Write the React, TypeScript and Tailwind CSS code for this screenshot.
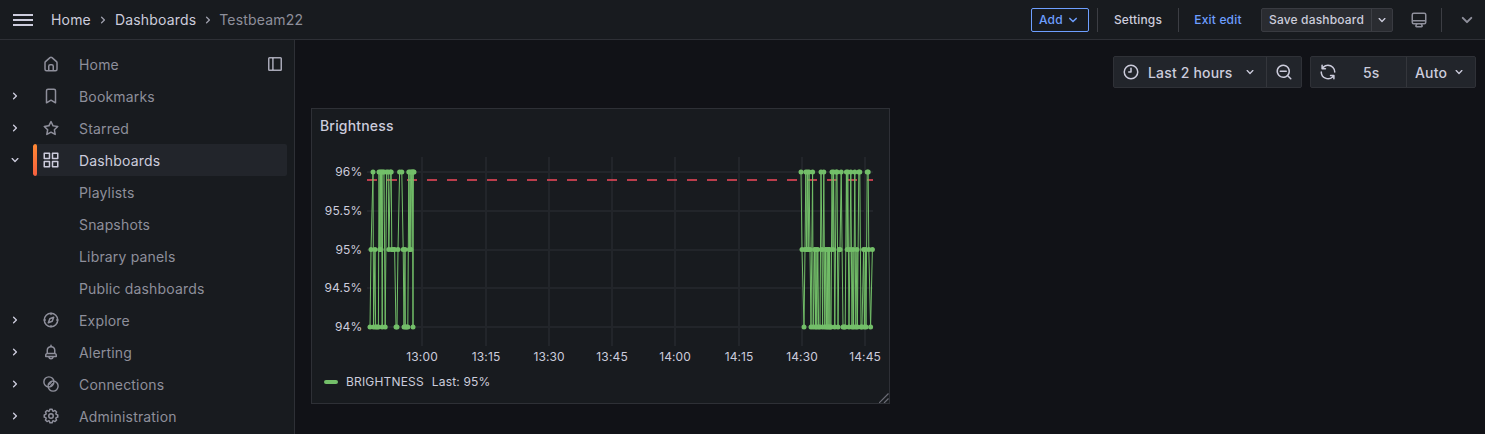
import type { ReactNode } from "react";

const ICONS = {
  angleDown:
    "M17,9.17a1,1,0,0,0-1.41,0L12,12.71,8.46,9.17a1,1,0,0,0-1.41,0,1,1,0,0,0,0,1.42l4.24,4.24a1,1,0,0,0,1.42,0L17,10.59A1,1,0,0,0,17,9.17Z",
  angleRight:
    "M14.83,11.29,10.59,7.05a1,1,0,0,0-1.42,0,1,1,0,0,0,0,1.41L12.71,12,9.17,15.54a1,1,0,0,0,0,1.41,1,1,0,0,0,.71.29,1,1,0,0,0,.71-.29l4.24-4.24A1,1,0,0,0,14.83,11.29Z",
  home: "M20,8h0L14,2.74a3,3,0,0,0-4,0L4,8a3,3,0,0,0-1,2.26V19a3,3,0,0,0,3,3H18a3,3,0,0,0,3-3V10.25A3,3,0,0,0,20,8ZM14,20H10V15a1,1,0,0,1,1-1h2a1,1,0,0,1,1,1Zm5-1a1,1,0,0,1-1,1H16V15a3,3,0,0,0-3-3H11a3,3,0,0,0-3,3v5H6a1,1,0,0,1-1-1V10.25a1,1,0,0,1,.34-.75l6-5.25a1,1,0,0,1,1.32,0l6,5.25a1,1,0,0,1,.34.75Z",
  bookmark:
    "M16,2H8A3,3,0,0,0,5,5V21a1,1,0,0,0,.5.87,1,1,0,0,0,1,0L12,18.69l5.5,3.18A1,1,0,0,0,18,22a1,1,0,0,0,.5-.13A1,1,0,0,0,19,21V5A3,3,0,0,0,16,2Zm1,17.27-4.5-2.6a1,1,0,0,0-1,0L7,19.27V5A1,1,0,0,1,8,4h8a1,1,0,0,1,1,1Z",
  star: "M22,9.67A1,1,0,0,0,21.14,9l-5.69-.83L12.9,3a1,1,0,0,0-1.8,0L8.55,8.16,2.86,9a1,1,0,0,0-.81.68,1,1,0,0,0,.25,1l4.13,4-1,5.68A1,1,0,0,0,6.9,21.44L12,18.77l5.1,2.67a.93.93,0,0,0,.46.12,1,1,0,0,0,.59-.19,1,1,0,0,0,.4-1l-1-5.68,4.13-4A1,1,0,0,0,22,9.67Zm-6.15,4a1,1,0,0,0-.29.88l.72,4.2-3.76-2a1.06,1.06,0,0,0-.94,0l-3.76,2,.72-4.2a1,1,0,0,0-.29-.88l-3-3,4.21-.61a1,1,0,0,0,.76-.55L12,5.7l1.88,3.82a1,1,0,0,0,.76.55l4.21.61Z",
  apps: "M10,13H3a1,1,0,0,0-1,1v7a1,1,0,0,0,1,1h7a1,1,0,0,0,1-1V14A1,1,0,0,0,10,13ZM9,20H4V15H9ZM21,2H14a1,1,0,0,0-1,1v7a1,1,0,0,0,1,1h7a1,1,0,0,0,1-1V3A1,1,0,0,0,21,2ZM20,9H15V4h5Zm1,4H14a1,1,0,0,0-1,1v7a1,1,0,0,0,1,1h7a1,1,0,0,0,1-1V14A1,1,0,0,0,21,13Zm-1,7H15V15h5ZM10,2H3A1,1,0,0,0,2,3v7a1,1,0,0,0,1,1h7a1,1,0,0,0,1-1V3A1,1,0,0,0,10,2ZM9,9H4V4H9Z",
  bell: "M18,13.18V10a6,6,0,0,0-5-5.91V3a1,1,0,0,0-2,0V4.09A6,6,0,0,0,6,10v3.18A3,3,0,0,0,4,16v2a1,1,0,0,0,1,1H8.14a4,4,0,0,0,7.72,0H19a1,1,0,0,0,1-1V16A3,3,0,0,0,18,13.18ZM8,10a4,4,0,0,1,8,0v3H8Zm4,10a2,2,0,0,1-1.72-1h3.44A2,2,0,0,1,12,20Zm6-3H6V16a1,1,0,0,1,1-1H17a1,1,0,0,1,1,1Z",
  cog: "M21.32,9.55l-1.89-.63.89-1.78A1,1,0,0,0,20.13,6L18,3.87a1,1,0,0,0-1.15-.19l-1.78.89-.63-1.89A1,1,0,0,0,13.5,2h-3a1,1,0,0,0-.95.68L8.92,4.57,7.14,3.68A1,1,0,0,0,6,3.87L3.87,6a1,1,0,0,0-.19,1.15l.89,1.78-1.89.63A1,1,0,0,0,2,10.5v3a1,1,0,0,0,.68.95l1.89.63-.89,1.78A1,1,0,0,0,3.87,18L6,20.13a1,1,0,0,0,1.15.19l1.78-.89.63,1.89a1,1,0,0,0,.95.68h3a1,1,0,0,0,.95-.68l.63-1.89,1.78.89A1,1,0,0,0,18,20.13L20.13,18a1,1,0,0,0,.19-1.15l-.89-1.78,1.89-.63A1,1,0,0,0,22,13.5v-3A1,1,0,0,0,21.32,9.55ZM20,12.78l-1.2.4A2,2,0,0,0,17.64,16l.57,1.14-1.1,1.1L16,17.64a2,2,0,0,0-2.79,1.16l-.4,1.2H11.22l-.4-1.2A2,2,0,0,0,8,17.64l-1.14.57-1.1-1.1L6.36,16A2,2,0,0,0,5.2,13.18L4,12.78V11.22l1.2-.4A2,2,0,0,0,6.36,8L5.79,6.89l1.1-1.1L8,6.36A2,2,0,0,0,10.82,5.2l.4-1.2h1.56l.4,1.2A2,2,0,0,0,16,6.36l1.14-.57,1.1,1.1L17.64,8a2,2,0,0,0,1.16,2.79l1.2.4ZM12,8a4,4,0,1,0,4,4A4,4,0,0,0,12,8Zm0,6a2,2,0,1,1,2-2A2,2,0,0,1,12,14Z",
  clock: "M12,2A10,10,0,1,0,22,12,10,10,0,0,0,12,2Zm0,18a8,8,0,1,1,8-8A8,8,0,0,1,12,20ZM12,6a1,1,0,0,0-1,1v4H9a1,1,0,0,0,0,2h3a1,1,0,0,0,1-1V7A1,1,0,0,0,12,6Z",
  zoomOut:
    "M21.71,20.29,18,16.61A9,9,0,1,0,16.61,18l3.68,3.68a1,1,0,0,0,1.42,0A1,1,0,0,0,21.71,20.29ZM11,18a7,7,0,1,1,7-7A7,7,0,0,1,11,18Zm4-8H7a1,1,0,0,0,0,2h8a1,1,0,0,0,0-2Z",
  sync: "M19.91,15.51H15.38a1,1,0,0,0,0,2h2.4A8,8,0,0,1,4,12a1,1,0,0,0-2,0,10,10,0,0,0,16.88,7.23V21a1,1,0,0,0,2,0V16.5A1,1,0,0,0,19.91,15.51ZM12,2A10,10,0,0,0,5.12,4.77V3a1,1,0,0,0-2,0V7.5a1,1,0,0,0,1,1h4.5a1,1,0,0,0,0-2H6.22A8,8,0,0,1,20,12a1,1,0,0,0,2,0A10,10,0,0,0,12,2Z",
  monitor:
    "M19,2H5A3,3,0,0,0,2,5V15a3,3,0,0,0,3,3H7.64l-.58,1a2,2,0,0,0,0,2,2,2,0,0,0,1.75,1h6.46A2,2,0,0,0,17,21a2,2,0,0,0,0-2l-.59-1H19a3,3,0,0,0,3-3V5A3,3,0,0,0,19,2ZM8.77,20,10,18H14l1.2,2ZM20,15a1,1,0,0,1-1,1H5a1,1,0,0,1-1-1V14H20Zm0-3H4V5A1,1,0,0,1,5,4H19a1,1,0,0,1,1,1Z",
};

type IconName = keyof typeof ICONS;

function Icon({ name, className = "size-[18px]" }: { name: IconName; className?: string }) {
  return (
    <svg viewBox="0 0 24 24" fill="currentColor" className={`shrink-0 ${className}`}>
      <path d={ICONS[name]} />
    </svg>
  );
}

function CompassIcon() {
  return (
    <svg viewBox="0 0 24 24" fill="none" stroke="currentColor" strokeWidth="2" strokeLinecap="round" strokeLinejoin="round" className="size-[18px]">
      <circle cx="12" cy="12" r="9" />
      <path d="M15.6 8.4l-2 5.2-5.2 2 2-5.2ZM12 3v1.5M12 19.5V21M3 12h1.5M19.5 12H21" />
    </svg>
  );
}

function ConnectionsIcon() {
  return (
    <svg viewBox="0 0 24 24" fill="none" stroke="currentColor" strokeWidth="1.9" className="size-[18px]">
      <circle cx="9.2" cy="9.2" r="6.7" />
      <circle cx="14.8" cy="14.8" r="6.7" />
      <path d="M9.3 12.6l3.3-3.3M11.4 14.7l3.3-3.3" />
    </svg>
  );
}

function DockIcon() {
  return (
    <svg viewBox="0 0 16 16" fill="none" stroke="currentColor" strokeWidth="1.5" className="size-4">
      <rect x="1.75" y="1.75" width="12.5" height="12.5" rx="0.8" />
      <path d="M5.9 2v12" />
    </svg>
  );
}

function Divider({ className = "" }: { className?: string }) {
  return <div className={`h-6 w-px bg-[#ccccdc]/20 ${className}`} />;
}

function TopBar() {
  return (
    <header className="flex h-10 shrink-0 items-center border-b border-[#2e3036] bg-[#181b1f] pl-[13px] pr-1.5">
      <div className="flex w-5 flex-col gap-[3px]">
        <div className="h-0.5 bg-[#ccccdc]" />
        <div className="h-0.5 bg-[#ccccdc]" />
        <div className="h-0.5 bg-[#ccccdc]" />
      </div>
      <nav className="ml-[18px] flex items-center text-sm">
        <span>Home</span>
        <Icon name="angleRight" className="mx-1 mt-px size-4 text-[#9d9eab]" />
        <span>Dashboards</span>
        <Icon name="angleRight" className="mx-1 mt-px size-4 text-[#9d9eab]" />
        <span className="-ml-px text-[#8e8f9b]">Testbeam22</span>
      </nav>
      <div className="ml-auto flex items-center text-xs font-medium">
        <button className="flex h-6 w-[58px] items-center rounded-[2px] border border-[#6e9fff] pl-[7px] text-[#6e9fff]">
          Add
          <Icon name="angleDown" className="ml-px size-[18px]" />
        </button>
        <Divider className="ml-2" />
        <span className="w-20 text-center">Settings</span>
        <Divider />
        <span className="w-[78px] text-center text-[#6e9fff]">Exit edit</span>
        <div className="ml-1 flex h-6 rounded-[2px] border border-[#393b41] bg-[#2a2c31]">
          <button className="flex w-[110px] items-center justify-center border-r border-[#3d3f45]">Save dashboard</button>
          <button className="flex w-5 items-center justify-center">
            <Icon name="angleDown" className="size-4" />
          </button>
        </div>
        <Icon name="monitor" className="ml-[17px] size-[18px] text-[#8e8f9b]" />
        <Divider className="ml-[13px]" />
        <Icon name="angleDown" className="ml-[13px] size-6 text-[#8e8f9b]" />
      </div>
    </header>
  );
}

function NavRow({ label, icon, arrow, active = false, trailing }: { label: string; icon?: ReactNode; arrow?: "right" | "down"; active?: boolean; trailing?: ReactNode }) {
  return (
    <li className="flex h-8 items-center">
      <div className="flex w-[33px] justify-start pl-[7px] text-[#ccccdc]">
        {arrow && <Icon name={arrow === "right" ? "angleRight" : "angleDown"} className="size-4" />}
      </div>
      <div className={`flex h-8 w-[254px] items-center overflow-hidden rounded-[2px] ${active ? "bg-[#22252b] text-[#ccccdc]" : "text-[#8e8f9b]"}`}>
        <div className={`h-full w-1 rounded-[2px] ${active ? "bg-linear-to-b from-[#ff8833] to-[#f55f3e]" : ""}`} />
        <div className="ml-[5px] flex w-[37px] items-center">{icon}</div>
        <span className="flex-1 pt-0.5 text-sm">{label}</span>
        {trailing}
      </div>
    </li>
  );
}

function Sidebar() {
  return (
    <aside className="w-[295px] shrink-0 border-r border-[#2e3036] bg-[#181b1f] pt-2">
      <ul>
        <NavRow label="Home" icon={<Icon name="home" />} trailing={<div className="mr-1 text-[#ccccdc]/80"><DockIcon /></div>} />
        <NavRow label="Bookmarks" icon={<Icon name="bookmark" />} arrow="right" />
        <NavRow label="Starred" icon={<Icon name="star" />} arrow="right" />
        <NavRow label="Dashboards" icon={<Icon name="apps" />} arrow="down" active />
        <NavRow label="Playlists" />
        <NavRow label="Snapshots" />
        <NavRow label="Library panels" />
        <NavRow label="Public dashboards" />
        <NavRow label="Explore" icon={<CompassIcon />} arrow="right" />
        <NavRow label="Alerting" icon={<Icon name="bell" />} arrow="right" />
        <NavRow label="Connections" icon={<ConnectionsIcon />} arrow="right" />
        <NavRow label="Administration" icon={<Icon name="cog" />} arrow="right" />
      </ul>
    </aside>
  );
}

function TimeControls() {
  return (
    <div className="flex h-8 justify-end gap-2 text-sm font-medium">
      <div className="flex rounded-[2px] border border-[#2f3137] bg-[#22252b]">
        <button className="flex w-[153px] items-center border-r border-[#34363c] pl-2">
          <Icon name="clock" />
          <span className="ml-2 flex-1 pt-0.5 text-left">Last 2 hours</span>
          <Icon name="angleDown" className="mr-2 size-4" />
        </button>
        <button className="flex w-[34px] items-center justify-center">
          <Icon name="zoomOut" />
        </button>
      </div>
      <div className="flex rounded-[2px] border border-[#2f3137] bg-[#22252b]">
        <button className="flex w-[96px] items-center border-r border-[#34363c] pl-2">
          <Icon name="sync" />
          <span className="ml-[26px] pt-0.5">5s</span>
        </button>
        <button className="flex w-[68px] items-center pl-2">
          <span className="pt-0.5">Auto</span>
          <Icon name="angleDown" className="ml-1 size-4" />
        </button>
      </div>
    </div>
  );
}

/* Samples as [x, percent], two bursts of readings with a gap between them. */
const BURSTS: [number, number][][] = [
  [
    [370, 94], [371, 95], [373, 96], [373.6, 94], [375, 95], [375.6, 94], [377, 94], [378.4, 94], [379, 96], [379.8, 95], [380.4, 96],
    [381, 95], [381.6, 96], [382.2, 94], [382.8, 96], [384, 96], [385.2, 94], [386.6, 96], [388.2, 96], [388.8, 95], [390.4, 96],
    [391.2, 96], [391.8, 95], [393, 95], [394.6, 95], [396, 94], [397, 94], [398, 95], [399.6, 96], [401.8, 96], [403.2, 95],
    [404, 94], [405, 95], [405.4, 94], [406.6, 94], [407.8, 94], [408.8, 96], [409.4, 95], [410.2, 96], [410.8, 95], [411.6, 96],
    [412.4, 96], [413, 94], [413.4, 96], [414, 96],
  ],
  [
    [801, 96], [802, 95], [804, 94], [805, 95], [805.8, 96], [806.6, 95], [807.4, 96], [808.2, 95], [809, 96], [810, 95], [811, 94],
    [812.6, 96], [813.2, 94], [814.6, 95], [815.4, 94], [816, 95], [816.8, 94], [817.8, 95], [818.6, 94], [820, 94], [821, 96],
    [822, 95], [822.6, 94], [823.8, 96], [824.8, 94], [825.6, 95], [826.4, 94], [827.2, 95], [827.8, 94], [828.4, 95], [829, 94],
    [829.6, 95], [830.2, 94], [831, 94], [832, 96], [833, 95], [833.6, 96], [834.8, 94], [836.2, 96], [837, 96], [838, 94],
    [839, 95], [840, 95], [841.2, 96], [843, 94], [844.2, 94], [845.2, 94], [846.4, 96], [847.2, 95], [847.8, 96], [849, 94],
    [850, 95], [850.8, 96], [852, 94], [853, 95], [853.6, 94], [854.8, 96], [855.8, 94], [857, 95], [857.4, 94], [858.8, 96],
    [859.8, 96], [861, 94], [862, 94], [863.6, 95], [864.4, 94], [865.4, 95], [866, 94], [867.2, 96], [868.2, 96], [868.8, 95],
    [870.6, 94], [872.4, 95],
  ],
];

const TICKS: [number, string][] = [
  [422, "13:00"], [486, "13:15"], [549, "13:30"], [612, "13:45"], [675, "14:00"], [739, "14:15"], [802, "14:30"], [865, "14:45"],
];

const LEVELS: [number, string][] = [
  [172, "96%"], [211, "95.5%"], [250, "95%"], [288, "94.5%"], [327, "94%"],
];

const yOf = (percent: number) => 172 + (96 - percent) * 77.5;

function Chart() {
  return (
    <svg viewBox="312 144 577 224" className="h-[224px] w-[577px]" fontSize="12" fill="#ccccdc" letterSpacing="0.13">
      {TICKS.map(([x]) => (
        <rect key={x} x={x - 1} y="157" width="2" height="189" fill="#22252a" />
      ))}
      {LEVELS.map(([y]) => (
        <rect key={y} x="367" y={y - 1} width="506" height="2" fill="#22252a" />
      ))}
      {LEVELS.map(([y, label]) => (
        <text key={label} x="362.3" y={y + 4} textAnchor="end">{label}</text>
      ))}
      {TICKS.map(([x, label]) => (
        <text key={label} x={x + 0.1} y="361" textAnchor="middle">{label}</text>
      ))}
      <path d="M367 180H873" stroke="#f2495c" strokeOpacity="0.75" strokeWidth="2" strokeDasharray="10 10" />
      {BURSTS.map((points, i) => (
        <g key={i}>
          <polyline points={points.map(([x, v]) => `${x},${yOf(v)}`).join(" ")} fill="none" stroke="#73bf69" strokeWidth="1" />
          {points.map(([x, v], j) => (
            <circle key={j} cx={x} cy={yOf(v)} r="2.5" fill="#73bf69" />
          ))}
        </g>
      ))}
    </svg>
  );
}

function Panel() {
  return (
    <section className="relative mt-5 flex h-[296px] w-[579px] flex-col border border-[#2e3036] bg-[#181b1f]">
      <h2 className="flex h-[35px] items-center pb-0.5 pl-2 text-sm font-medium">Brightness</h2>
      <Chart />
      <div className="flex h-7 items-center pl-3 text-xs">
        <span className="h-1 w-3.5 rounded-full bg-[#73bf69]" />
        <span className="ml-2">BRIGHTNESS</span>
        <span className="ml-2">Last: 95%</span>
      </div>
      <svg viewBox="0 0 10 10" className="absolute right-0 bottom-0 size-2.5" stroke="#6b6c76" strokeWidth="1.2">
        <path d="M0 10L9.5 0.5M5 10L9.5 5.5" />
      </svg>
    </section>
  );
}

export default function App() {
  return (
    <div className="flex h-[434px] w-[1485px] flex-col overflow-hidden bg-[#111217] font-['Inter',sans-serif] tracking-[0.01071em] text-[#ccccdc]">
      <TopBar />
      <div className="flex min-h-0 flex-1">
        <Sidebar />
        <main className="min-w-0 flex-1 pt-4 pr-[9px] pl-4">
          <TimeControls />
          <Panel />
        </main>
      </div>
    </div>
  );
}
